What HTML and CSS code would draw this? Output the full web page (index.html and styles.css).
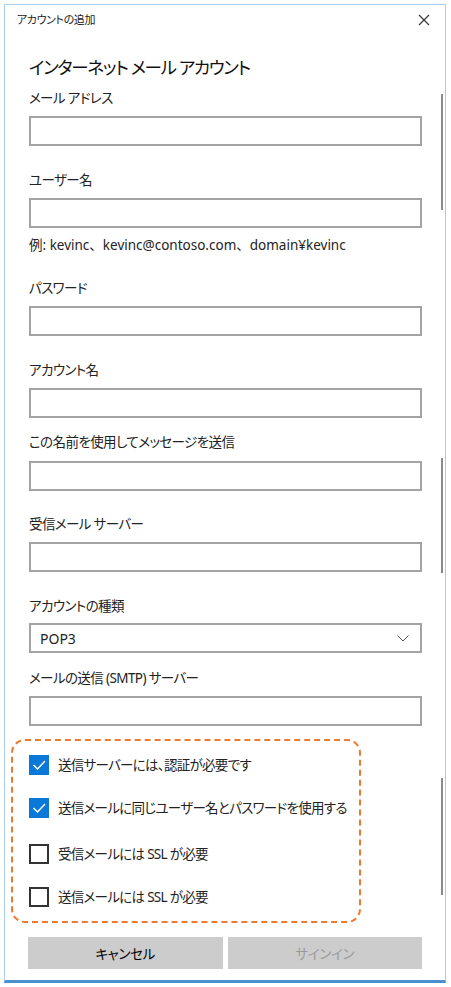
FILE: index.html
```html
<!DOCTYPE html>
<html lang="ja">
<head>
<meta charset="utf-8">
<link rel="stylesheet" href="styles.css">
</head>
<body>
<div class="window">
  <div class="titlebar">
    <span class="title">アカウントの追加</span>
    <svg class="close" width="12" height="12" viewBox="0 0 12 12"><path d="M1 1 L11 11 M11 1 L1 11" stroke="#333" stroke-width="1.1" fill="none"/></svg>
  </div>
  <div class="content">
    <h1 class="heading">インターネット メール アカウント</h1>
    <div class="field f1"><div class="label">メール アドレス</div><div class="input"></div></div>
    <div class="field f2"><div class="label">ユーザー名</div><div class="input"></div></div>
    <div class="hint">例: kevinc、kevinc@contoso.com、domain¥kevinc</div>
    <div class="field f3"><div class="label">パスワード</div><div class="input"></div></div>
    <div class="field f4"><div class="label">アカウント名</div><div class="input"></div></div>
    <div class="field f5"><div class="label">この名前を使用してメッセージを送信</div><div class="input"></div></div>
    <div class="field f6"><div class="label">受信メール サーバー</div><div class="input"></div></div>
    <div class="field f7"><div class="label">アカウントの種類</div>
      <div class="input select"><span>POP3</span>
        <svg width="12" height="7" viewBox="0 0 12 7"><path d="M0.5 0.5 L6 6 L11.5 0.5" stroke="#555" stroke-width="1" fill="none"/></svg>
      </div>
    </div>
    <div class="field f8"><div class="label">メールの送信 (SMTP) サーバー</div><div class="input"></div></div>
    <div class="options">
      <div class="opt"><span class="box checked"><svg width="20" height="20" viewBox="0 0 20 20"><path d="M4.5 10 L8.5 14 L16 6" stroke="#fff" stroke-width="1.5" fill="none"/></svg></span><span>送信サーバーには、認証が必要です</span></div>
      <div class="opt"><span class="box checked"><svg width="20" height="20" viewBox="0 0 20 20"><path d="M4.5 10 L8.5 14 L16 6" stroke="#fff" stroke-width="1.5" fill="none"/></svg></span><span>送信メールに同じユーザー名とパスワードを使用する</span></div>
      <div class="opt o3"><span class="box"></span><span>受信メールには SSL が必要</span></div>
      <div class="opt"><span class="box"></span><span>送信メールには SSL が必要</span></div>
    </div>
  </div>
  <div class="buttons">
    <div class="btn primary">キャンセル</div>
    <div class="btn disabled">サインイン</div>
  </div>
  <div class="thumb t1"></div>
  <div class="thumb t2"></div>
  <div class="thumb t3"></div>
</div>
</body>
</html>
```

FILE: styles.css
```css
html, body {
  margin: 0;
  padding: 0;
  background: #ffffff;
}
body {
  font-family: "Noto Sans", "Noto Sans CJK JP", sans-serif;
  font-feature-settings: "palt";
  color: #222;
  padding: 4px 0 0 4px;
}
.window {
  position: relative;
  width: 440px;
  border: 1px solid #a9cdea;
  border-bottom: 3px solid #4b90d0;
  background: #fff;
}
.titlebar {
  height: 30px;
  display: flex;
  align-items: center;
  justify-content: space-between;
  padding: 0 15px 0 12px;
}
.title {
  font-size: 11px;
  letter-spacing: -0.4px;
  line-height: 16px;
}
.close {
  display: block;
}
.content {
  padding: 0 23px 0 24px;
  display: flex;
  flex-direction: column;
}
.heading {
  margin: 18px 0 0 0;
  font-size: 17.5px;
  letter-spacing: -1.3px;
  line-height: 28px;
  font-weight: normal;
  color: #111;
}
.field {
  display: flex;
  flex-direction: column;
  margin-top: 24px;
}
.label {
  font-size: 13.5px;
  letter-spacing: -0.6px;
  line-height: 20px;
  margin-bottom: 8px;
}
.input {
  height: 26px;
  border: 2px solid #a3a3a3;
  box-sizing: content-box;
}
.f1 { margin-top: 7px; }
.f3 { margin-top: 23px; }
.f5 { margin-top: 14px; }
.f5 .label { margin-bottom: 9px; }
.f6 { margin-top: 23px; }
.f7 .label { margin-bottom: 7px; }
.f8 { margin-top: 15px; }
.hint {
  font-size: 13.5px;
  font-feature-settings: normal;
  line-height: 20px;
  margin-top: 7px;
}
.select {
  display: flex;
  align-items: center;
  justify-content: space-between;
  padding: 0 11px 0 9px;
  font-size: 14px;
}
.select svg { display: block; }
.options {
  margin: 13px 0 0 -18px;
  width: 330px;
  border: 2px dashed #ea7b30;
  border-radius: 14px;
  padding: 14px 0 14px 16px;
  display: flex;
  flex-direction: column;
  gap: 23px;
}
.opt {
  display: flex;
  align-items: center;
  gap: 9px;
  font-size: 13.5px;
  letter-spacing: -0.7px;
  line-height: 20px;
}
.o3 { margin-top: 3px; }
.box {
  width: 20px;
  height: 20px;
  box-sizing: border-box;
  border: 2px solid #333;
  flex: none;
}
.box.checked {
  border: none;
  background: #0a78d7;
}
.box svg { display: block; }
.buttons {
  display: flex;
  gap: 5px;
  padding: 14px 23px 11px 23px;
}
.btn {
  flex: 1;
  height: 32px;
  display: flex;
  align-items: center;
  justify-content: center;
  background: #cccccc;
  font-size: 13.5px;
  letter-spacing: -0.3px;
}
.primary { color: #000; }
.disabled { color: #9a9a9a; }
.thumb {
  position: absolute;
  left: 436px;
  width: 2px;
  background: #8a8a8a;
}
.t1 { top: 89px; height: 116px; }
.t2 { top: 453px; height: 115px; }
.t3 { top: 773px; height: 117px; }
```
